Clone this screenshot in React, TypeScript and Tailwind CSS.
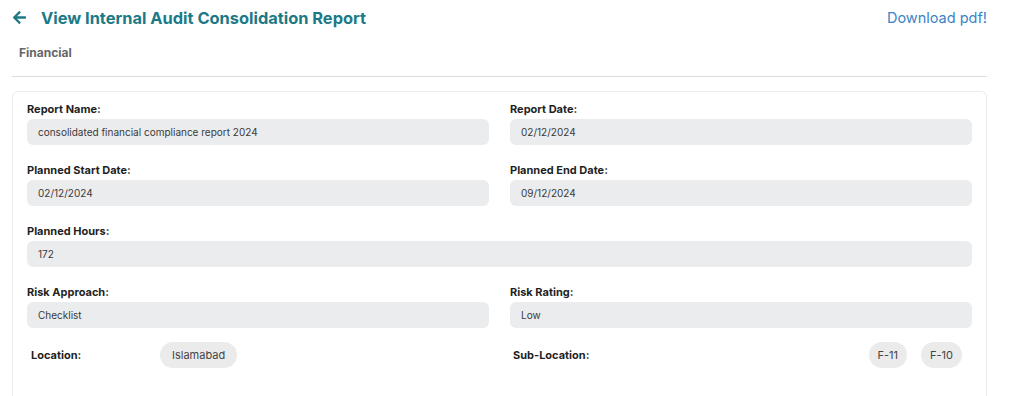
import { FaArrowLeft } from "react-icons/fa";

const fontStack = { fontFamily: "Inter, 'Noto Sans', sans-serif" };

const Field = ({ label, value }: { label: string; value: string }) => (
  <div className="flex flex-col">
    <label className="text-[11px] font-bold text-[#1f1f1f] leading-[14px] mb-[3px]">{label}</label>
    <div className="h-[26px] rounded-md bg-[#ebecee] px-[11px] flex items-center text-[10px] text-[#3a3a3a]">
      {value}
    </div>
  </div>
);

const Chip = ({ text, small }: { text: string; small?: boolean }) => (
  <span
    className={
      small
        ? "h-[26px] rounded-full bg-[#ebebeb] px-[9px] flex items-center text-[11px] text-[#444]"
        : "h-[26px] rounded-full bg-[#ebebeb] px-[12px] flex items-center text-[11px] text-[#444]"
    }
  >
    {text}
  </span>
);

const App = () => {
  return (
    <div className="bg-white min-h-[396px]" style={fontStack}>
      <div className="w-[975px] ml-3">
        {/* header */}
        <div className="flex items-center justify-between h-[36px]">
          <div className="flex items-center">
            <FaArrowLeft className="w-[15px] h-[15px] text-[#1b7a86]" />
            <h1 className="ml-[14px] text-[16.4px] font-bold text-[#1b7a86]">
              View Internal Audit Consolidation Report
            </h1>
          </div>
          <a className="text-[14.5px] text-[#3b83c6]">Download pdf!</a>
        </div>
        <div className="pl-[7px] pt-[8px] pb-[14px] text-[12px] font-bold text-[#666]">Financial</div>
        <div className="border-t border-[#dcdcdc]" />

        {/* card */}
        <div className="mt-[14px] border border-[#ececec] rounded-md px-[14px] pt-[10px] pb-12">
          <div className="grid grid-cols-2 gap-x-[21px] gap-y-[18px]">
            <Field label="Report Name:" value="consolidated financial compliance report 2024" />
            <Field label="Report Date:" value="02/12/2024" />
            <Field label="Planned Start Date:" value="02/12/2024" />
            <Field label="Planned End Date:" value="09/12/2024" />
            <div className="col-span-2">
              <Field label="Planned Hours:" value="172" />
            </div>
            <Field label="Risk Approach:" value="Checklist" />
            <Field label="Risk Rating:" value="Low" />
            <div className="flex items-center -mt-[4px]">
              <span className="w-[133px] pl-[4px] text-[11px] font-bold text-[#1f1f1f]">Location:</span>
              <Chip text="Islamabad" />
            </div>
            <div className="flex items-center -mt-[4px] pr-[10px]">
              <span className="pl-[3px] text-[11px] font-bold text-[#1f1f1f]">Sub-Location:</span>
              <div className="ml-auto flex gap-[14px]">
                <Chip text="F-11" small />
                <Chip text="F-10" small />
              </div>
            </div>
          </div>
        </div>
      </div>
    </div>
  );
};

export default App;
